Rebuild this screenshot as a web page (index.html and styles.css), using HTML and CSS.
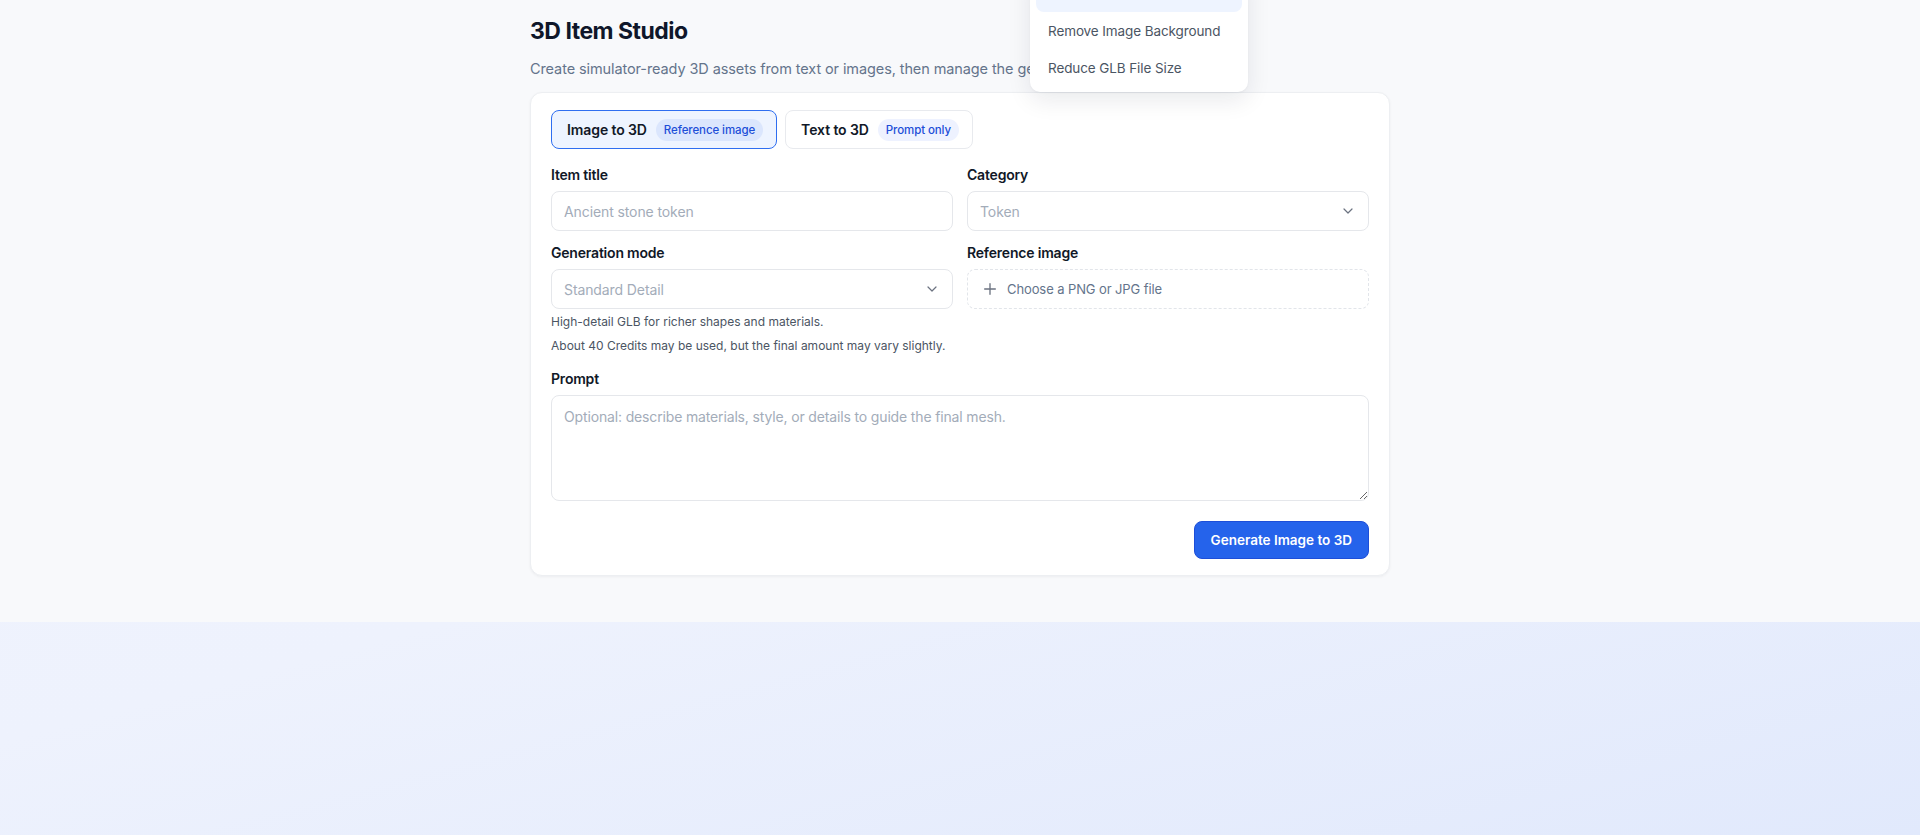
FILE: index.html
```html
<!DOCTYPE html>
<html lang="en">
<head>
    <meta charset="UTF-8">
    <meta name="viewport" content="width=device-width, initial-scale=1.0">
    <title>3D Item Studio</title>
    <link rel="stylesheet" href="styles.css">
</head>
<body>
<main class="studio">
    <div class="studio-inner">
        <!-- Tools menu, opened from the header -->
        <div class="tools-menu">
            <a href="#" class="tools-item active">3D Item Studio</a>
            <a href="#" class="tools-item">Remove Image Background</a>
            <a href="#" class="tools-item">Reduce GLB File Size</a>
        </div>

        <h1>3D Item Studio</h1>
        <p class="subtitle">Create simulator-ready 3D assets from text or images, then manage the generated files in one place.</p>

        <div class="card">
            <div class="mode-tabs">
                <button class="mode-tab active" data-mode="image">Image to 3D <span class="badge">Reference image</span></button>
                <button class="mode-tab" data-mode="text">Text to 3D <span class="badge">Prompt only</span></button>
            </div>

            <div class="form-grid">
                <div class="field">
                    <label for="itemTitle">Item title</label>
                    <input type="text" id="itemTitle" class="input" placeholder="Ancient stone token">
                </div>

                <div class="field">
                    <label for="category">Category</label>
                    <div class="select-wrap">
                        <select id="category" class="input select">
                            <option>Token</option>
                            <option>Furniture</option>
                            <option>Prop</option>
                        </select>
                        <svg class="chevron" width="16" height="16" viewBox="0 0 24 24" fill="none" stroke="currentColor" stroke-width="1.8" stroke-linecap="round" stroke-linejoin="round"><path d="M6 9l6 6 6-6"/></svg>
                    </div>
                </div>

                <div class="field">
                    <label for="genMode">Generation mode</label>
                    <div class="select-wrap">
                        <select id="genMode" class="input select">
                            <option>Standard Detail</option>
                            <option>Fast Draft</option>
                        </select>
                        <svg class="chevron" width="16" height="16" viewBox="0 0 24 24" fill="none" stroke="currentColor" stroke-width="1.8" stroke-linecap="round" stroke-linejoin="round"><path d="M6 9l6 6 6-6"/></svg>
                    </div>
                    <p class="hint first">High-detail GLB for richer shapes and materials.</p>
                    <p class="hint last">About 40 Credits may be used, but the final amount may vary slightly.</p>
                </div>

                <div class="field">
                    <label for="refImage">Reference image</label>
                    <label class="file-picker" for="refImage">
                        <svg width="16" height="16" viewBox="0 0 24 24" fill="none" stroke="currentColor" stroke-width="2" stroke-linecap="round"><path d="M12 4v16M4 12h16"/></svg>
                        <span>Choose a PNG or JPG file</span>
                    </label>
                    <input type="file" id="refImage" class="file-hidden" accept=".png,.jpg,.jpeg">
                </div>

                <div class="field wide">
                    <label for="prompt">Prompt</label>
                    <textarea id="prompt" class="input textarea" placeholder="Optional: describe materials, style, or details to guide the final mesh."></textarea>
                </div>
            </div>

            <div class="actions">
                <button class="generate-button">Generate Image to 3D</button>
            </div>
        </div>
    </div>
</main>
</body>
</html>
```

FILE: styles.css
```css
body {
    font-family: Inter, 'Noto Sans', sans-serif;
    margin: 0;
    min-height: 835px;
    color: #111827;
    background: linear-gradient(165deg, #f1f4fe 0%, #eef2fd 55%, #e1e9fc 100%);
}

.studio {
    background-color: #f8f9fb;
    height: 622px;
    padding-top: 15px;
    box-sizing: border-box;
}

.studio-inner {
    position: relative;
    max-width: 860px;
    margin: 0 auto;
}

h1 {
    margin: 0;
    font-size: 23px;
    line-height: 32px;
    font-weight: 700;
    color: #0f172a;
    letter-spacing: -0.5px;
}

.subtitle {
    margin: 10px 0 11px;
    font-size: 14.5px;
    line-height: 24px;
    color: #64748b;
    letter-spacing: -0.1px;
}

/* dropdown from the top navigation */
.tools-menu {
    position: absolute;
    top: -45px;
    left: 500px;
    width: 206px;
    padding: 6px;
    background: #fff;
    border-radius: 10px;
    box-shadow: 0 8px 24px rgba(15, 23, 42, 0.09), 0 1px 2px rgba(15, 23, 42, 0.04);
    display: flex;
    flex-direction: column;
    gap: 1px;
    z-index: 10;
}

.tools-item {
    padding: 8px 12px;
    font-size: 13.5px;
    line-height: 20px;
    letter-spacing: -0.1px;
    color: #4b5563;
    text-decoration: none;
    border-radius: 8px;
}

.tools-item.active {
    background-color: #eef4ff;
}

.card {
    background: #fff;
    border: 1px solid #edeff2;
    border-radius: 12px;
    padding: 17px 20px 16px;
    box-shadow: 0 1px 3px rgba(15, 23, 42, 0.05);
}

.mode-tabs {
    display: flex;
    gap: 8px;
    margin-bottom: 16px;
}

.mode-tab {
    display: flex;
    align-items: center;
    gap: 9px;
    height: 39px;
    padding: 0 13px 0 15px;
    font-family: inherit;
    font-size: 14px;
    font-weight: 600;
    letter-spacing: -0.1px;
    color: #111827;
    background: #fff;
    border: 1px solid #e8eaee;
    border-radius: 8px;
    cursor: pointer;
}

.mode-tab.active {
    background: #eef4ff;
    border-color: #2f6ef0;
}

.badge {
    padding: 3px 8px;
    font-size: 11.5px;
    font-weight: 500;
    line-height: 16px;
    letter-spacing: -0.1px;
    color: #1d4ed8;
    background: #eef2ff;
    border-radius: 999px;
}

.mode-tab.active .badge {
    background: #dbe6fd;
}

.form-grid {
    display: grid;
    grid-template-columns: 1fr 1fr;
    column-gap: 14px;
    row-gap: 12px;
}

.field.wide {
    grid-column: 1 / -1;
}

.field label {
    display: block;
    margin-bottom: 6px;
    font-size: 14px;
    line-height: 20px;
    font-weight: 600;
    letter-spacing: -0.2px;
    color: #111827;
}

.input {
    width: 100%;
    height: 40px;
    padding: 0 12px;
    font-family: inherit;
    font-size: 14px;
    letter-spacing: -0.1px;
    color: #111827;
    background: #fff;
    border: 1px solid #e5e7eb;
    border-radius: 8px;
    box-sizing: border-box;
    outline: none;
}

.input::placeholder {
    color: #a3acb9;
}

.select-wrap {
    position: relative;
}

.select {
    appearance: none;
    color: #a3acb9;
    padding-right: 36px;
}

.chevron {
    position: absolute;
    right: 13px;
    top: 12px;
    color: #6b7280;
    pointer-events: none;
}

.hint {
    margin: 6px 0 0;
    font-size: 12px;
    line-height: 18px;
    color: #4b5563;
}

.hint.first {
    margin-top: 4px;
}

.hint.last {
    margin-bottom: 2px;
}

.field .file-picker {
    display: flex;
    align-items: center;
    gap: 9px;
    height: 40px;
    margin: 0;
    padding: 0 14px;
    font-size: 13px;
    font-weight: 400;
    letter-spacing: -0.1px;
    color: #64748b;
    border: 1px dashed #e2e5ea;
    border-radius: 8px;
    box-sizing: border-box;
    cursor: pointer;
}

.file-picker svg {
    color: #6b7280;
}

.file-hidden {
    display: none;
}

.textarea {
    height: 106px;
    padding: 10px 12px;
    line-height: 22px;
    letter-spacing: -0.15px;
    resize: vertical;
}

.actions {
    display: flex;
    justify-content: flex-end;
    margin-top: 16px;
}

.generate-button {
    height: 38px;
    padding: 0 16px;
    font-family: inherit;
    font-size: 13.5px;
    font-weight: 600;
    color: #fff;
    background-color: #2563eb;
    border: 1px solid #1d4ed8;
    border-radius: 8px;
    cursor: pointer;
}

.generate-button:hover {
    background-color: #1d4ed8;
}
```
